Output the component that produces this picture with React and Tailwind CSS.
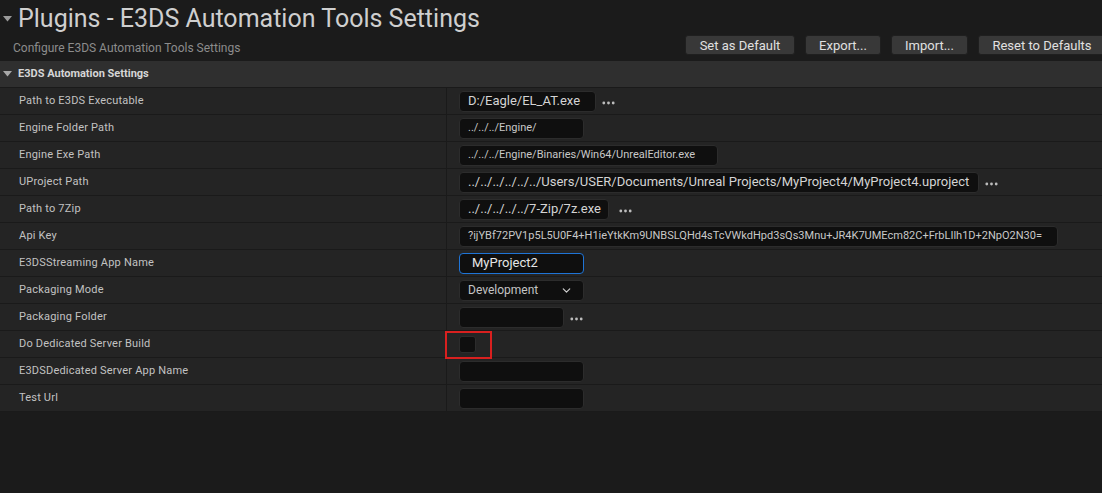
import React from "react";
import { ChevronDown } from "lucide-react";

const Dots = () => (
  <svg width="13" height="4" viewBox="0 0 13 4" className="mt-[4px] shrink-0">
    <circle cx="1.8" cy="2" r="1.4" fill="#bdbdbd" />
    <circle cx="6.5" cy="2" r="1.4" fill="#bdbdbd" />
    <circle cx="11.2" cy="2" r="1.4" fill="#bdbdbd" />
  </svg>
);

const Field = ({ w, text, small, dots, focus, dotsGap = "ml-[6px]" }) => (
  <div className="flex items-center">
    <div
      className={`h-[21px] ${w} rounded-[4px] bg-[#0f0f0f] border flex items-center overflow-hidden whitespace-nowrap ${
        focus ? "border-[#1f74d6]" : "border-[#2c2c2c]"
      }`}
    >
      {text && (
        <span
          className={
            small
              ? "pl-[8px] text-[11px] text-[#c8c8c8]"
              : focus
              ? "pl-[12px] text-[13px] text-[#e6e6e6]"
              : "pl-[8px] text-[13px] text-[#d4d4d4]"
          }
        >
          {text}
        </span>
      )}
    </div>
    {dots && (
      <div className={dotsGap}>
        <Dots />
      </div>
    )}
  </div>
);

const rows = [
  { label: "Path to E3DS Executable", value: <Field w="w-[137px]" text="D:/Eagle/EL_AT.exe" dots /> },
  { label: "Engine Folder Path", value: <Field w="w-[125px]" text="../../../Engine/" small /> },
  { label: "Engine Exe Path", value: <Field w="w-[259px]" text="../../../Engine/Binaries/Win64/UnrealEditor.exe" small /> },
  {
    label: "UProject Path",
    value: (
      <Field
        w="w-[520px]"
        text="../../../../../../Users/USER/Documents/Unreal Projects/MyProject4/MyProject4.uproject"
        dots
      />
    ),
  },
  { label: "Path to 7Zip", value: <Field w="w-[150px]" text="../../../../../7-Zip/7z.exe" dots dotsGap="ml-[10px]" /> },
  {
    label: "Api Key",
    value: (
      <Field
        w="w-[599px]"
        text="?ijYBf72PV1p5L5U0F4+H1ieYtkKm9UNBSLQHd4sTcVWkdHpd3sQs3Mnu+JR4K7UMEcm82C+FrbLIlh1D+2NpO2N30="
        small
      />
    ),
  },
  { label: "E3DSStreaming App Name", value: <Field w="w-[125px]" text="MyProject2" focus /> },
  {
    label: "Packaging Mode",
    value: (
      <div className="h-[21px] w-[125px] rounded-[4px] bg-[#0f0f0f] border border-[#2c2c2c] flex items-center justify-between pl-[8px] pr-[10px]">
        <span className="text-[12px] text-[#c4c4c4]">Development</span>
        <ChevronDown className="w-[13px] h-[13px] text-[#d0d0d0]" strokeWidth={2.2} />
      </div>
    ),
  },
  { label: "Packaging Folder", value: <Field w="w-[105px]" dots /> },
  {
    label: "Do Dedicated Server Build",
    value: (
      <div className="relative w-[17px] h-[17px]">
        <div className="w-[17px] h-[17px] rounded-[3px] bg-[#0f0f0f] border border-[#2c2c2c]" />
        <div className="absolute left-[-14px] top-[-5px] w-[47px] h-[28px] border-2 border-[#d9201f]" />
      </div>
    ),
  },
  { label: "E3DSDedicated Server App Name", value: <Field w="w-[125px]" /> },
  { label: "Test Url", value: <Field w="w-[125px]" /> },
];

export default function App() {
  return (
    <div
      className="w-[1102px] h-[493px] overflow-hidden bg-[#1b1b1b] text-[#c4c4c4]"
      style={{ fontFamily: "Roboto, 'Noto Sans', sans-serif" }}
    >
      {/* Header */}
      <div className="h-[61px] flex">
        <div className="flex-1">
          <div className="flex items-center h-[36px]">
            <svg width="9" height="6" viewBox="0 0 9 6" className="ml-[3px] mr-[6px] mt-[1px]">
              <path d="M0 0 L9 0 L4.5 5.5 Z" fill="#9a9a9a" />
            </svg>
            <span className="text-[25px] leading-none text-[#cfcfcf]">
              Plugins - E3DS Automation Tools Settings
            </span>
          </div>
          <div className="pl-[13px] mt-[3px] text-[12px] text-[#8c8c8c]">
            Configure E3DS Automation Tools Settings
          </div>
        </div>
        <div className="flex gap-[10px] pt-[35px] mr-[-4px]">
          <button className="h-[20px] w-[110px] rounded-[3px] bg-[#383838] border border-[#1f1f1f] text-[13px] text-[#e0e0e0]">
            Set as Default
          </button>
          <button className="h-[20px] w-[76px] rounded-[3px] bg-[#383838] border border-[#1f1f1f] text-[13px] text-[#e0e0e0]">
            Export...
          </button>
          <button className="h-[20px] w-[77px] rounded-[3px] bg-[#383838] border border-[#1f1f1f] text-[13px] text-[#e0e0e0]">
            Import...
          </button>
          <button className="h-[20px] w-[128px] rounded-[3px] bg-[#383838] border border-[#1f1f1f] text-[13px] text-[#e0e0e0]">
            Reset to Defaults
          </button>
        </div>
      </div>

      {/* Section header */}
      <div className="h-[27px] bg-[#2f2f2f] border-b border-[#1a1a1a] flex items-center">
        <svg width="9" height="6" viewBox="0 0 9 6" className="ml-[3px] mr-[6px]">
          <path d="M0 0 L9 0 L4.5 5.5 Z" fill="#a8a8a8" />
        </svg>
        <span className="text-[11px] font-bold text-[#d6d6d6]">E3DS Automation Settings</span>
      </div>

      {/* Rows */}
      <div>
        {rows.map((r) => (
          <div key={r.label} className="h-[27px] flex bg-[#242424] border-b border-[#1a1a1a]">
            <div className="w-[447px] flex items-center pl-[19px] text-[11px] text-[#c2c2c2] border-r border-[#1a1a1a] tracking-[0.2px]">
              {r.label}
            </div>
            <div className="flex-1 flex items-center pl-[12px]">{r.value}</div>
          </div>
        ))}
      </div>
    </div>
  );
}
